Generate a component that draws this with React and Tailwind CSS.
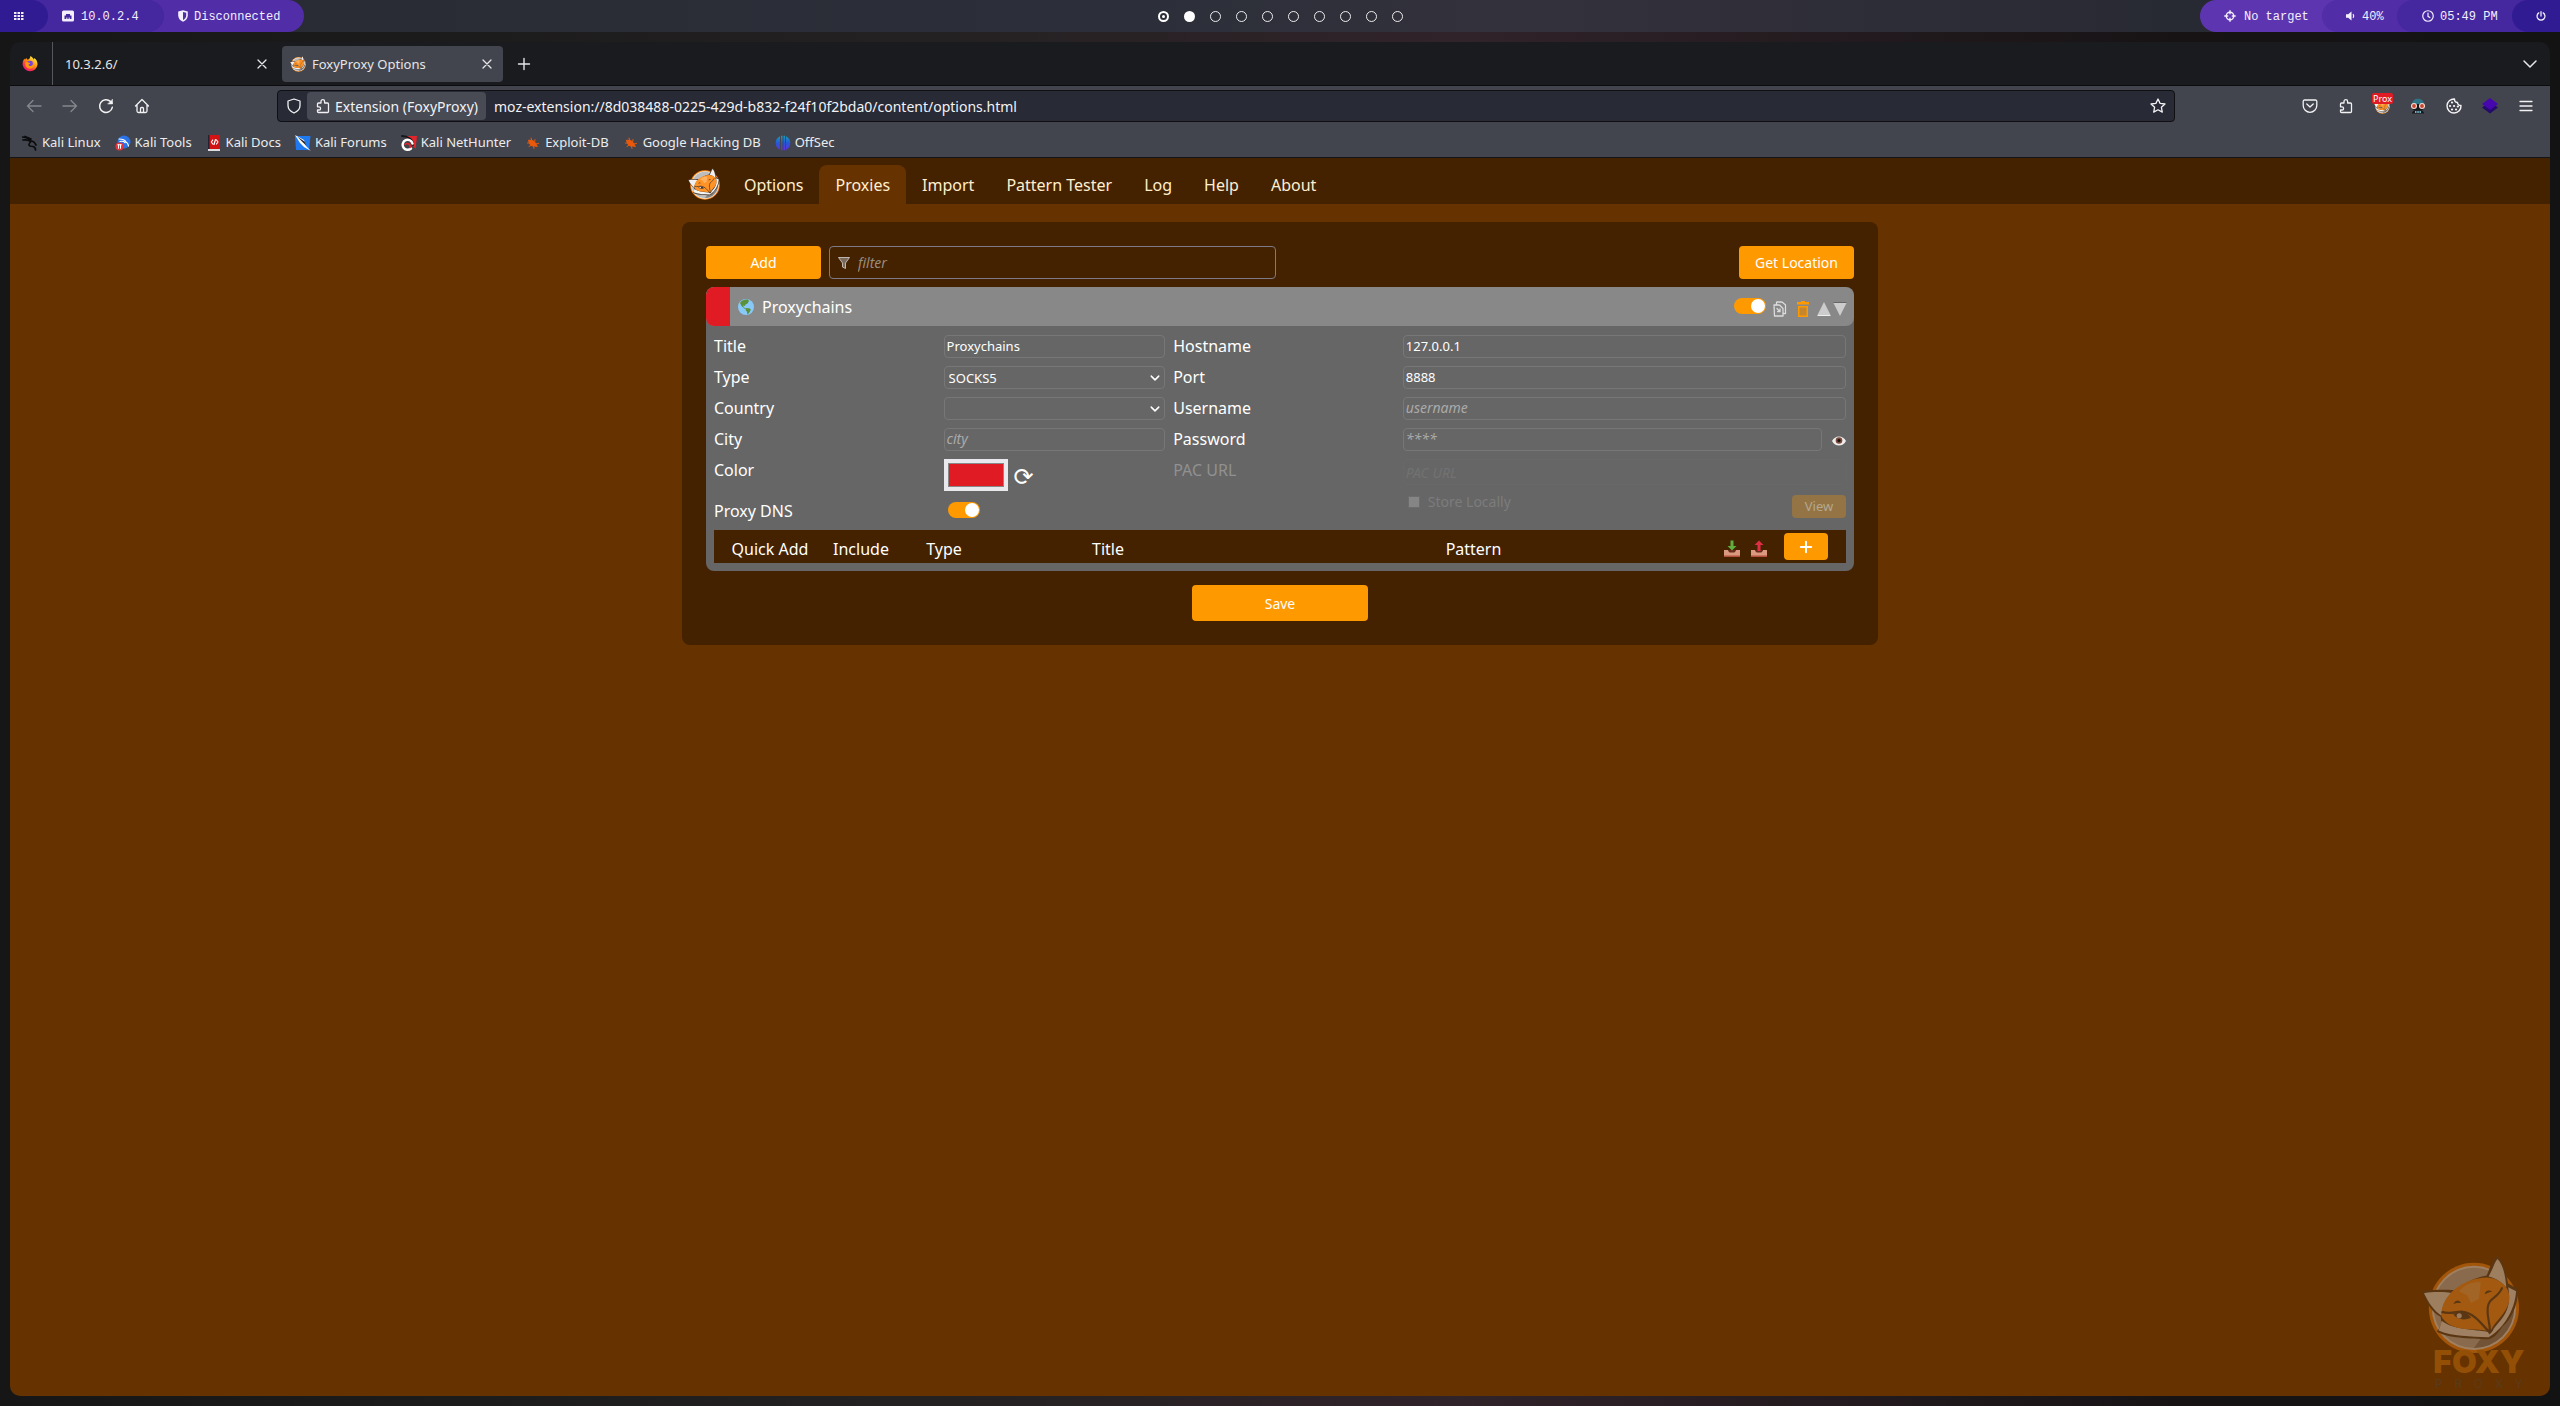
import React from "react";

const NOTO = "font-['Noto_Sans',sans-serif]";

function Svg({ className = "size-4", children, ...rest }) {
  return (
    <svg viewBox="0 0 16 16" fill="none" stroke="currentColor" strokeWidth="1.2" strokeLinecap="round" strokeLinejoin="round" className={`shrink-0 ${className}`} aria-hidden="true" {...rest}>
      {children}
    </svg>
  );
}

/* ---------- drawings ---------- */

function FoxLogo({ className }) {
  return (
    <svg viewBox="0 0 100 100" className={`shrink-0 ${className}`} aria-hidden="true">
      <circle cx="53" cy="53" r="46" fill="#ff8c1a" />
      <circle cx="53" cy="53" r="43" fill="#f2f2f2" />
      <circle cx="53" cy="53" r="41" fill="#bdbdbd" />
      <path d="M53 94a41 41 0 0 0 41-41c0-14-8-22-8-22L66 76z" fill="#858585" />
      <path d="M0 36C18 33 36 35 36 35C46 25 56 22 66 20C70 10 72 3 77 0C84 6 86 20 88 28L98 34C98 52 90 66 82 72C76 82 72 84 68 85C48 84 26 84 15 77C20 72 20 68 19 62C10 58 5 48 0 36Z" fill="#4d3b2e" />
      <path d="M2 38C14 36 24 37 32 38C24 44 20 52 20 61C12 56 7 48 2 38Z" fill="#f0f0f0" />
      <path d="M68 21C73 12 74 6 77 3C83 9 85 20 86 32C80 26 76 23 68 21Z" fill="#f0f0f0" />
      <path d="M20 66C19 72 17 75 17 76C30 82 50 82 68 83C74 80 94 64 96 36L88 32C93 60 77 66 71 78C50 74 34 76 20 66Z" fill="#f4f4f4" />
      <path d="M20 62C18 38 46 22 66 22C82 23 91 34 89 46C86 60 74 66 70 77C56 73 30 79 20 62Z" fill="#ff9326" />
      <path d="M38 36C44 28 54 26 60 27L58 44L50 48L46 40Z" fill="#ffb060" />
      <path d="M20 57C30 60 36 56 42 57C52 58 60 68 67 76" fill="none" stroke="#4d3b2e" strokeWidth="2.4" />
      <path d="M32 60C38 54 46 57 50 63C43 66 37 65 32 60Z" fill="#4d3b2e" />
      <circle cx="38" cy="61" r="2.6" fill="#e8e8e8" />
      <path d="M32 49c3-5 6-4 8-1-3 0-6 0-8 1z" fill="#4d3b2e" />
      <path d="M64 39c1-5 5-4 8-3-4 1-5 2-8 3z" fill="#4d3b2e" />
      <path d="M82 32C77 44 68 42 67 53C66 64 70 70 69 76" fill="none" stroke="#4d3b2e" strokeWidth="2.2" />
      <path d="M65 75h8l-4 5z" fill="#4d3b2e" />
    </svg>
  );
}

function FirefoxIcon() {
  return (
    <svg viewBox="0 0 16 16" className="size-4 shrink-0" aria-hidden="true">
      <defs>
        <linearGradient id="ffx" x1="13" y1="1" x2="3" y2="15" gradientUnits="userSpaceOnUse">
          <stop offset="0" stopColor="#fff44f" />
          <stop offset=".4" stopColor="#ff980e" />
          <stop offset=".7" stopColor="#ff3647" />
          <stop offset="1" stopColor="#e31587" />
        </linearGradient>
      </defs>
      <path d="M.6 7.5C.7 5 2 3.4 2.6 2.6c0 .6.2 1 .4 1.2C3.3 3 4 2.3 4.6 2c0 .8.3 1.4.9 1.8C7.5 3.5 8 2 8.4 0c2.4 1.2 3 3 3.4 3.6.3-.4.4-1 .3-1.5C14.5 3.5 15.7 6 15.5 8.800A7.5 7.5 0 0 1 .6 8.5z" fill="url(#ffx)" />
      <circle cx="8" cy="8" r="3.3" fill="#7542e5" />
      <path d="M3.5 6.5c1.2-.8 2.500-.5 3.5.2l1.5.3c-.3 1-1.6 1-2 1.8.5 1.6 3 1.6 4 .2.8-1.5.2-3-.5-3.5 2.2.8 2.8 3 2 4.8-1.500 3-6 3.200-8 .5-.8-1.400-1-3-.5-4.300z" fill="#ff980e" />
    </svg>
  );
}

const PUZZLE = "M6 5V3.500a1.800 1.800 0 0 1 3.600 0V5H12.500a1 1 0 0 1 1 1v7.500a1 1 0 0 1-1 1H3.500a1 1 0 0 1-1-1V12H4a1.600 1.600 0 0 0 0-3.200H2.500V6a1 1 0 0 1 1-1z";

function Toggle({ id, label, className = "" }) {
  return (
    <input
      id={id}
      type="checkbox"
      role="switch"
      aria-label={label}
      defaultChecked
      className={`h-4 w-8 shrink-0 appearance-none rounded-full bg-[#aaa] p-px before:block before:size-[14px] before:rounded-full before:bg-white checked:bg-[#f90] checked:before:ml-4 ${className}`}
    />
  );
}

/* ---------- desktop bar ---------- */

function DesktopBar() {
  return (
    <header className="flex h-8 items-center justify-between bg-[linear-gradient(90deg,#282a33,#2c2f39_45%,#33313c_60%,#282a33_85%)] font-['Liberation_Mono',monospace] text-[12px] text-[#f3effc]">
      <div className="flex h-full flex-1 items-center">
        <div className="flex h-full items-center rounded-r-2xl bg-[#512da8]">
          <div className="flex h-full items-center rounded-r-2xl bg-[#4527a0]">
            <div className="flex h-full w-12 items-center rounded-r-2xl bg-[#311b92] pl-[14px]">
              <svg viewBox="0 0 10 10" className="size-[10px]" fill="currentColor" aria-hidden="true">
                <path d="M0 1h2.500v2H0zM3.500 1H6v2H3.500zM7 1h2.500v2H7zM0 4h2.500v2H0zM3.500 4H6v2H3.500zM7 4h2.500v2H7zM0 7h2.500v2H0zM3.500 7H6v2H3.500zM7 7h2.500v2H7z" />
              </svg>
            </div>
            <div className="flex w-[116px] items-center gap-[7px] pl-[14px]">
              <svg viewBox="0 0 12 12" className="size-3" aria-hidden="true">
                <rect width="12" height="11" y=".5" rx="1.500" fill="currentColor" />
                <path d="M2.500 9V5.500H4V4h4v1.500h1.500V9z" fill="#4527a0" />
                <path d="M4.500 9V7.500M6 9V7.500M7.500 9V7.500" stroke="currentColor" strokeWidth=".7" />
              </svg>
              <span className="pt-px">10.0.2.4</span>
            </div>
          </div>
          <div className="flex w-[140px] items-center gap-[6px] pl-[14px]">
            <svg viewBox="0 0 10 12" className="h-3 w-[10px]" aria-hidden="true">
              <path d="M5 .3 9.800 1.500v4C9.800 8.500 7.500 10.800 5 11.700 2.500 10.800.2 8.500.2 5.500v-4z" fill="currentColor" />
              <path d="M5 2l3.200.8V5.500C8.200 7.500 6.800 9.200 5 10z" fill="#512da8" />
            </svg>
            <span className="pt-px">Disconnected</span>
          </div>
        </div>
      </div>

      <div className="flex items-center gap-[15px]" aria-label="Workspaces">
        {Array.from({ length: 10 }, (_, i) => (
          <button key={i} aria-label={`Workspace ${i + 1}`} className={`flex size-[11px] items-center justify-center rounded-full border-white ${i === 1 ? "bg-white" : i === 0 ? "border-2" : "border opacity-90"}`}>
            {i === 0 && <span className="size-[3px] rounded-full bg-white" />}
          </button>
        ))}
      </div>

      <div className="flex h-full flex-1 items-center justify-end">
        <div className="flex h-full items-center rounded-l-2xl bg-[#5e35b1]">
          <div className="flex w-[122px] items-center gap-2 pl-6">
            <Svg className="size-3" strokeWidth="1.800"><circle cx="8" cy="8" r="5" /><path d="M8 1v4M8 11v4M1 8h4M11 8h4" /></Svg>
            <span className="pt-px whitespace-nowrap">No target</span>
          </div>
          <div className="flex h-full items-center rounded-l-2xl bg-[#512da8]">
            <div className="flex w-[75px] items-center gap-[6px] pl-6">
              <svg viewBox="0 0 10 10" className="size-[10px]" aria-hidden="true"><path d="M0 3.200h2.200L5.500.5v9L2.200 6.800H0z" fill="currentColor" /><path d="M7 3.200q1.500 1.800 0 3.600" stroke="currentColor" strokeWidth="1.200" fill="none" /></svg>
              <span className="pt-px">40%</span>
            </div>
            <div className="flex h-full items-center rounded-l-2xl bg-[#4527a0]">
              <div className="flex w-[115px] items-center gap-[6px] pl-[25px]">
                <Svg className="size-3" strokeWidth="1.600"><circle cx="8" cy="8" r="7" /><path d="M8 4v4.500l2.500 1.500" /></Svg>
                <span className="pt-px whitespace-nowrap">05:49 PM</span>
              </div>
              <div className="flex h-full w-12 items-center rounded-l-2xl bg-[#311b92] pl-6">
                <Svg className="size-[10px]" strokeWidth="2"><path d="M8 1v7M4.500 3a6.300 6.300 0 1 0 7 0" /></Svg>
              </div>
            </div>
          </div>
        </div>
      </div>
    </header>
  );
}

/* ---------- browser chrome ---------- */

function CloseX() {
  return <Svg className="size-4" strokeWidth="1.300"><path d="M4 4l8 8M12 4l-8 8" /></Svg>;
}

function TabStrip() {
  return (
    <div className="flex h-11 items-center border-b border-[#0c0c0f] bg-[#1a1b1f] text-[13px] text-[#e6e6e8]">
      <button aria-label="Firefox" className="flex h-full w-[43px] items-center border-r border-[#55575f] pl-3"><FirefoxIcon /></button>
      <div className="flex w-[221px] items-center justify-between pr-1 pl-3">
        <span className="pt-[2px]">10.3.2.6/</span>
        <button aria-label="Close tab"><CloseX /></button>
      </div>
      <div className="ml-2 flex h-9 w-[221px] items-center rounded bg-[#42454d] px-2">
        <FoxLogo className="size-4" />
        <span className="ml-[6px] flex-1 pt-[2px]">FoxyProxy Options</span>
        <button aria-label="Close tab"><CloseX /></button>
      </div>
      <button aria-label="New tab" className="ml-[13px]"><Svg className="size-4" strokeWidth="1.400"><path d="M8 2.500v11M2.500 8h11" /></Svg></button>
      <button aria-label="List all tabs" className="mr-3 ml-auto"><Svg className="size-4" strokeWidth="1.500"><path d="M2 5l6 6 6-6" /></Svg></button>
    </div>
  );
}

function NavBar() {
  return (
    <div className="flex h-[42px] items-center bg-[#42454d] px-4 pb-[2px] text-[#f2f2f4]">
      <div className="flex w-[251px] shrink-0 items-center gap-5">
        <button aria-label="Back" className="text-[#85878d]"><Svg strokeWidth="1.300"><path d="M15 8H1.500M7 2.500 1.500 8 7 13.500" /></Svg></button>
        <button aria-label="Forward" className="text-[#85878d]"><Svg strokeWidth="1.300"><path d="M1 8h13.500M9 2.500 14.500 8 9 13.500" /></Svg></button>
        <button aria-label="Reload"><Svg strokeWidth="1.500"><path d="M14.300 9.300A6.400 6.400 0 1 1 12.500 3.500L14 5" /><path d="M14.500 1.500v4.500H10z" fill="currentColor" strokeWidth=".5" /></Svg></button>
        <button aria-label="Home"><Svg strokeWidth="1.300"><path d="M1.500 8 8 1.500 14.500 8M3 6.800V13a1.500 1.500 0 0 0 1.500 1.500h7A1.500 1.500 0 0 0 13 13V6.800M6.500 14.500v-4a1 1 0 0 1 1-1h1a1 1 0 0 1 1 1v4" /></Svg></button>
      </div>
      <div className="flex h-8 min-w-0 flex-1 items-center rounded border border-[#0f0f14] bg-[#282a36] px-2">
        <Svg strokeWidth="1.300"><path d="M8 1 14 3v4.500c0 3.500-2.500 6-6 7.500-3.500-1.500-6-4-6-7.500V3z" /></Svg>
        <button className="ml-[5px] flex h-7 items-center gap-[4px] rounded bg-[#484a54] pr-2 pl-2 text-[14px] whitespace-nowrap">
          <Svg className="size-4" strokeWidth="1.300"><path d={PUZZLE} /></Svg>
          Extension (FoxyProxy)
        </button>
        <input aria-label="Address" defaultValue="moz-extension://8d038488-0225-429d-b832-f24f10f2bda0/content/options.html" className="ml-2 min-w-0 flex-1 bg-transparent text-[14px] outline-none" />
        <button aria-label="Bookmark this page"><Svg strokeWidth="1.300"><path d="M8 1l2.100 4.400 4.900.6-3.600 3.300.9 4.800L8 11.800l-4.300 2.300.9-4.800L1 6l4.900-.6z" /></Svg></button>
      </div>
      <div className="flex w-[359px] shrink-0 items-center justify-end gap-5">
        <button aria-label="Save to Pocket"><Svg strokeWidth="1.300"><path d="M2.500 2h11a1.300 1.300 0 0 1 1.300 1.300V7.500a6.800 6.800 0 0 1-13.600 0V3.300A1.300 1.300 0 0 1 2.500 2zM4.800 6 8 9l3.200-3" /></Svg></button>
        <button aria-label="Extensions"><Svg strokeWidth="1.300"><path d={PUZZLE} /></Svg></button>
        <button aria-label="FoxyProxy" className="relative">
          <FoxLogo className="size-4" />
          <span className="absolute -top-[5px] -left-[2px] rounded-xs bg-[#e01b24] px-px text-[9px] leading-[11px] text-white">Prox</span>
        </button>
        <button aria-label="User agent switcher">
          <svg viewBox="0 0 16 16" className="size-4" aria-hidden="true">
            <path d="M2 7C2 2.500 5 .8 8 .8S14 2.500 14 7z" fill="#2f7486" />
            <path d="M2.500 6h11v5l-1.500 1.500H4L2.500 11z" fill="#17191d" />
            <circle cx="4" cy="8" r="3" fill="#f4dcd4" /><circle cx="12" cy="8" r="3" fill="#f4dcd4" />
            <circle cx="4" cy="8" r="1.900" fill="#c8452f" /><circle cx="12" cy="8" r="1.900" fill="#c8452f" />
            <path d="M2 15.500c0-2 1.500-3 3-3h6c1.500 0 3 1 3 3z" fill="#17191d" />
            <path d="M5 13h1.500v2H5zM7.300 13h1.500v2H7.300zM9.500 13H11v2H9.500z" fill="#6fb3c4" />
          </svg>
        </button>
        <button aria-label="Cookies">
          <Svg strokeWidth="1.400"><path d="M8.500 1a3 3 0 0 0 3 3.500A3 3 0 0 0 15 7.500 7 7 0 1 1 8.500 1z" /><path d="M6 4.500h.1M4 8h.1M8 8h.1M6 11.500h.1M10 11.500h.1M11.800 8.500h.1" strokeWidth="2.200" /></Svg>
        </button>
        <button aria-label="Wappalyzer">
          <svg viewBox="0 0 16 16" className="size-4" aria-hidden="true"><path d="M0 9.500 8 4l8 5.500L8 15.500z" fill="#240a6b" /><path d="M0 6 8 0l8 6-8 6z" fill="#4608ad" /></svg>
        </button>
        <button aria-label="Open menu"><Svg className="size-4" strokeWidth="1.300"><path d="M2 3.500h12M2 8h12M2 12.500h12" /></Svg></button>
      </div>
    </div>
  );
}

const Bug = (
  <g><path d="M3 5c3-1 6 0 8 3l2 4-4-.5C6.500 12 3.500 9 3 5z" fill="#e8590c" stroke="none" /><path d="M6 3l1 3M10 4.500 9.500 7.500M13.500 8.500l-3 .5M2.500 8l2.500 0M4 11.500l2.500-1.500M9 13.500l-.5-2.500" stroke="#e8590c" strokeWidth="1" /></g>
);

const BOOKMARKS = [
  ["Kali Linux", <g><path d="M.5 2c4 .5 7 1.500 8.500 4C11 6 13 8 14 10M1 5c3-.5 6 0 8 1.500-3 3-3 5 2 5 2 .5 2.500 1.500 2.500 3.500M3 1.500 9 4" stroke="#0b0c0e" strokeWidth="1.700" /></g>],
  ["Kali Tools", <g><circle cx="9" cy="7" r="6.500" fill="#2a72e8" stroke="none" /><path d="M4 4c3 0 6 1 7 3 2 1 2 2 2.500 4M5 6.500c2-.5 4 0 5 1" stroke="#fff" /><circle cx="4.500" cy="11.500" r="4" fill="#e5323b" stroke="none" /><path d="M3.500 9.800v3.500M5.500 9.800v3.500M2.800 9.800h3.600" stroke="#fff" strokeWidth="1" /></g>],
  ["Kali Docs", <g stroke="none"><rect x="2" y="0" width="12" height="14" fill="#d31313" /><rect x="2" y="0" width="1.500" height="14" fill="#223" /><path d="M2 14h12v2H2z" fill="#ddd" /><path d="M6.800 5 5.300 7l1.500 2M10.500 5l1.500 2-1.500 2M9.500 4.500l-1.500 5" stroke="#fff" /></g>],
  ["Kali Forums", <g stroke="none"><path d="M0 1h15.500L14 15H1z" fill="#1f7af0" /><path d="M0 0 9 5l2 6 5 5-7-4-4-4z" fill="#fff" /><path d="M2 1.500l7.500 5 2 4.500-3-3z" fill="#222" /></g>],
  ["Kali NetHunter", <g stroke="none"><path d="M4 1h12l-1.500 13z" fill="#e2252b" /><path d="M1 1c6 0 11 4 11 9" stroke="#16171a" strokeWidth="2" /><path d="M10 13.500a5 5 0 1 1 1.500-5" stroke="#fff" strokeWidth="2.400" /><path d="M4 9.500a3 3 0 0 1 5 3" stroke="#e2252b" strokeWidth="1.600" /></g>],
  ["Exploit-DB", Bug],
  ["Google Hacking DB", Bug],
  ["OffSec", <g stroke="none"><path d="M5 1.200v13.600A7.500 7.500 0 0 1 5 1.200zM6 .8h1.500v14.400H6zM8.500.8H10v14.400H8.500zM11 1.200a7.500 7.500 0 0 1 0 13.600z" fill="url(#os)" /><defs><linearGradient id="os" x1="0" y1="0" x2="0" y2="16" gradientUnits="userSpaceOnUse"><stop offset="0" stopColor="#17a4b5" /><stop offset=".5" stopColor="#2458d8" /><stop offset="1" stopColor="#6a2be0" /></linearGradient></defs></g>],
];

function Bookmarks() {
  return (
    <nav aria-label="Bookmarks" className="flex h-[30px] items-center gap-[14px] border-b border-[#14151a] bg-[#42454d] pl-3 text-[13px] text-[#ececee]">
      {BOOKMARKS.map(([name, icon]) => (
        <a key={name} href="#bookmark" className="flex items-center gap-1 whitespace-nowrap"><Svg>{icon}</Svg>{name}</a>
      ))}
    </nav>
  );
}

/* ---------- options page ---------- */

const BOX = "h-[23px] w-full min-w-0 rounded border border-[#777] bg-transparent px-[2px] text-[13px] text-white outline-none placeholder:text-[14px] placeholder:text-[#aaa] placeholder:italic";

function Select({ id, value }) {
  return (
    <div className="relative">
      <select id={id} defaultValue={value} className={`${BOX} block appearance-none pl-[4px]`}>
        <option>{value}</option>
      </select>
      <Svg className="pointer-events-none absolute top-[7px] right-[5px] size-[10px]" strokeWidth="2.400"><path d="M2 5l6 6 6-6" /></Svg>
    </div>
  );
}

function Tray({ up }) {
  return (
    <svg viewBox="0 0 18 18" className="size-[18px]" aria-hidden="true">
      <path d="M1 10h4l1 2h6l1-2h4v7H1z" fill="#d99a80" /><path d="M1 15.500h16V17H1z" fill="#b4513c" />
      <path d="M5.500 10 6.500 12.500h5l1-2.500z" fill="#6d2b1d" />
      {up ? <path d="M9 .5 13.500 5H10.500v6h-3V5H4.500z" fill="#dd2e44" /> : <path d="M9 10.500 4.500 6H7.500V.5h3V6h3z" fill="#5fae3f" />}
    </svg>
  );
}

function ProxyCard() {
  return (
    <section className="mt-2 overflow-hidden rounded-lg bg-[#666]">
      <div className="flex h-[39px] items-center overflow-hidden rounded-lg bg-[#888] pr-[7px]">
        <span className="h-full w-6 bg-[#e01b24]" />
        <svg viewBox="0 0 16 16" className="ml-2 size-4" aria-hidden="true">
          <circle cx="8" cy="8" r="8" fill="#88c9f9" />
          <path d="M3 2.500C5 .8 8 .3 10 .5l1 1.500-1.500 2.500-2 1-.5 1.500-2-.5 1 2 2 1-1 .5L3.500 7 2 4z" fill="#5c913b" />
          <path d="M8 9l4 .5.800 1.500-1.800 3-1.500 1.500-.7-3L7.500 11z" fill="#5c913b" />
        </svg>
        <h2 className="ml-2 flex-1 text-[16px]">Proxychains</h2>
        <Toggle label="Enable Proxychains" className="mb-px" />
        <div className="mt-1 ml-[6px] flex items-center">
          <button aria-label="Duplicate"><Svg className="size-4 text-[#ddd]" strokeWidth="1.300"><path d="M4.500 3.500V1h5.500l3.500 3v8.500h-2.500M2 4h5.500L11 7.500V15H2.500zM5 7.500l3 3M8 8v2.500H5.500" strokeDasharray="2 .8" /></Svg></button>
          <button aria-label="Delete" className="ml-2"><svg viewBox="0 0 14 16" className="h-4 w-[14px]" aria-hidden="true"><path d="M5 0h4v1h4v2.500H1V1h4zM2 5h10v11H2z" fill="#f90" /><path d="M3.500 6.500h7v8h-7z" fill="#c4872f" /></svg></button>
          <button aria-label="Move up" className="ml-[7px]"><svg viewBox="0 0 14 14" className="size-[14px]" aria-hidden="true"><path d="M7 0l6.500 13H.5z" fill="#ccc" /><path d="M.5 13.500h13" stroke="#eee" /></svg></button>
          <button aria-label="Move down" className="ml-[2px]"><svg viewBox="0 0 14 14" className="size-[14px]" aria-hidden="true"><path d="M.5 1h13L7 14z" fill="#ccc" /><path d="M.5 .5h13" stroke="#666" /></svg></button>
        </div>
      </div>

      <div className="px-2 pt-[9px] pb-2">
        <div className="grid grid-cols-[1fr_1fr_1fr_2fr] gap-x-2 gap-y-2 text-[16px] leading-[23px]">
          <label htmlFor="title">Title</label>
          <input id="title" defaultValue="Proxychains" className={BOX} />
          <label htmlFor="host">Hostname</label>
          <input id="host" defaultValue="127.0.0.1" className={BOX} />

          <label htmlFor="type">Type</label>
          <Select id="type" value="SOCKS5" />
          <label htmlFor="port">Port</label>
          <input id="port" defaultValue="8888" className={BOX} />

          <label htmlFor="country">Country</label>
          <Select id="country" value="" />
          <label htmlFor="user">Username</label>
          <input id="user" placeholder="username" className={BOX} />

          <label htmlFor="city">City</label>
          <input id="city" placeholder="city" className={BOX} />
          <label htmlFor="pass">Password</label>
          <div className="flex items-center gap-[10px]">
            <input id="pass" type="password" placeholder="****" className={BOX} />
            <button aria-label="Show password">
              <svg viewBox="0 0 14 12" className="mt-[2px] h-3 w-[14px]" aria-hidden="true"><path d="M0 6C3 0 11 0 14 6 11 12 3 12 0 6z" fill="#f0ecec" /><circle cx="7" cy="5.500" r="3.300" fill="#7a4a3a" /><circle cx="7" cy="5.500" r="1.600" fill="#141414" /></svg>
            </button>
          </div>

          <label htmlFor="color">Color</label>
          <div className="flex h-8 items-center gap-[6px]">
            <input id="color" type="color" defaultValue="#e01b24" className="h-8 w-16 appearance-none border-4 border-[#e9e9ed] bg-[#e9e9ed] p-0 [&::-webkit-color-swatch]:rounded-none [&::-webkit-color-swatch]:border-[#888] [&::-webkit-color-swatch-wrapper]:p-0" />
            <button aria-label="Random color" className="mt-1 font-['DejaVu_Sans',sans-serif] text-[24px] leading-6">⟳</button>
          </div>
          <label htmlFor="pac" className="text-[#919191]">PAC URL</label>
          <div className="row-span-2">
            <input id="pac" disabled placeholder="PAC URL" className="block h-[26px] w-full rounded border border-[#686868] bg-transparent px-[2px] text-[14px] placeholder:text-[#727272] placeholder:italic" />
            <div className="flex justify-between">
              <label htmlFor="local" className="flex items-center gap-2 pl-[5px] text-[14px] text-[#7c7c7c]">
                <input id="local" type="checkbox" disabled className="size-3 appearance-none border border-[#6c6c6c] bg-[#858585]" />
                Store Locally
              </label>
              <button disabled className="mt-[10px] h-[23px] w-[54px] rounded bg-[#947444] text-[13px] leading-none text-[#b2a892]">View</button>
            </div>
          </div>

          <label htmlFor="dns" className="pt-px">Proxy DNS</label>
          <div className="flex h-[31px] items-start pl-1"><Toggle id="dns" label="Proxy DNS" className="mt-[3px]" /></div>
        </div>

        <table className="w-full table-fixed bg-[#420]">
          <thead>
            <tr className="h-[33px] text-[16px] *:p-0 *:pt-1 *:font-normal *:leading-6">
              <th className="w-28">Quick Add</th>
              <th className="w-[70px]">Include</th>
              <th className="w-24">Type</th>
              <th className="w-[232px]">Title</th>
              <th>Pattern</th>
              <th className="w-[123px] !pt-0">
                <div className="flex items-center gap-[9px]">
                  <button aria-label="Import patterns" className="mt-1"><Tray /></button>
                  <button aria-label="Export patterns" className="mt-1"><Tray up /></button>
                  <button aria-label="Add pattern" className="ml-[7px] flex h-[27px] w-11 items-center justify-center rounded bg-[#f90]"><Svg className="size-[14px]" strokeWidth="2.200"><path d="M8 2v12M2 8h12" /></Svg></button>
                </div>
              </th>
            </tr>
          </thead>
        </table>
      </div>
    </section>
  );
}

function OptionsPage() {
  const tabs = ["Options", "Proxies", "Import", "Pattern Tester", "Log", "Help", "About"];
  return (
    <div className="relative flex-1 bg-[#630] text-white">
      <header className="bg-[#420]">
        <nav className="mx-auto flex h-[46px] w-full max-w-[1196px] items-end pl-[6px] text-[16px] text-[#ffefd0]">
          <FoxLogo className="mb-1 size-8" />
          <div className="ml-2 flex">
            {tabs.map((t) => (
              <a key={t} href={`#${t}`} className={`flex h-[39px] items-center rounded-t-lg px-4 ${t === "Proxies" ? "bg-[#630]" : ""}`}>{t}</a>
            ))}
          </div>
        </nav>
      </header>

      <main className="mx-auto mt-[18px] w-full max-w-[1196px] rounded-lg bg-[#420] p-6">
        <div className="flex items-center text-[14px]">
          <button className="h-[33px] w-[115px] rounded bg-[#f90]">Add</button>
          <label className="ml-2 flex h-[33px] w-[447px] items-center gap-2 rounded border border-[#7e7a85] px-2">
            <svg viewBox="0 0 12 12" className="size-3" aria-hidden="true"><path d="M.5.5h11L7.500 6v5.500L4.500 10V6z" fill="#7a6a5c" stroke="#bdb5ae" /></svg>
            <input aria-label="filter" placeholder="filter" className="min-w-0 flex-1 bg-transparent outline-none placeholder:text-[#9a8b7d] placeholder:italic" />
          </label>
          <button className="ml-auto h-[33px] w-[115px] rounded bg-[#f90]">Get Location</button>
        </div>
        <ProxyCard />
        <button className="mx-auto mt-[14px] block h-9 w-44 rounded bg-[#f90] text-[14px]">Save</button>
      </main>

      <div className="absolute right-6 bottom-1 flex w-[94px] flex-col items-center opacity-40" aria-hidden="true">
        <FoxLogo className="mr-4 -mb-1 size-[98px]" />
        <span className="font-[Inter,sans-serif] text-[32px] leading-6 font-black text-[#d87a10]">FOXY</span>
        <span className="mt-[2px] flex w-[88px] justify-between font-[Inter,sans-serif] text-[12px] leading-4 text-[#484848]">
          {[..."PROXY"].map((c) => <span key={c}>{c}</span>)}
        </span>
      </div>
    </div>
  );
}

export default function App() {
  return (
    <div className={`flex min-h-screen flex-col bg-[linear-gradient(90deg,#161616,#232122_35%,#302329_57%,#171315_85%,#131314)] ${NOTO}`}>
      <DesktopBar />
      <div className="m-[10px] flex flex-1 flex-col overflow-hidden rounded-[10px]">
        <TabStrip />
        <NavBar />
        <Bookmarks />
        <OptionsPage />
      </div>
    </div>
  );
}
